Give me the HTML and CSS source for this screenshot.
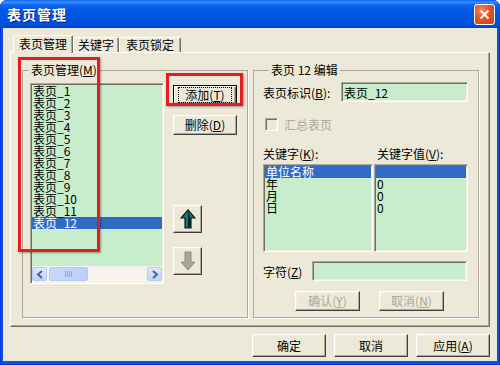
FILE: index.html
```html
<!DOCTYPE html>
<html lang="zh">
<head>
<meta charset="utf-8">
<title>表页管理</title>
<link rel="stylesheet" href="styles.css">
</head>
<body>
<div class="window">
  <div class="titlebar">
    <span class="title">表页管理</span>
    <div class="close"><svg width="11" height="11" viewBox="0 0 11 11"><path d="M1.5 1.5L9.5 9.5M9.5 1.5L1.5 9.5" stroke="#fff" stroke-width="2"/></svg></div>
  </div>
  <div class="client">
    <div class="tabs">
      <div class="tab active">表页管理</div>
      <div class="tab tab-key">关键字</div>
      <div class="tab">表页锁定</div>
    </div>
    <div class="panel">
      <fieldset class="group group-left">
        <legend>表页管理(<u>M</u>)</legend>
        <div class="left-body">
          <div class="listbox sheets">
            <div class="items">
              <div class="item">表页_1</div>
              <div class="item">表页_2</div>
              <div class="item">表页_3</div>
              <div class="item">表页_4</div>
              <div class="item">表页_5</div>
              <div class="item">表页_6</div>
              <div class="item">表页_7</div>
              <div class="item">表页_8</div>
              <div class="item">表页_9</div>
              <div class="item">表页_10</div>
              <div class="item">表页_11</div>
              <div class="item sel">表页_12</div>
            </div>
            <div class="hscroll">
              <div class="sb-btn"><svg width="8" height="9" viewBox="0 0 8 9"><path d="M6 1L2 4.5L6 8" fill="none" stroke="#4d6185" stroke-width="2"/></svg></div>
              <div class="sb-thumb"><svg width="8" height="6" viewBox="0 0 8 6"><path d="M0.5 0V6M2.5 0V6M4.5 0V6M6.5 0V6" stroke="#8ca8ea" stroke-width="1"/></svg></div>
              <div class="sb-track"></div>
              <div class="sb-btn"><svg width="8" height="9" viewBox="0 0 8 9"><path d="M2 1L6 4.5L2 8" fill="none" stroke="#4d6185" stroke-width="2"/></svg></div>
            </div>
          </div>
          <div class="side-buttons">
            <button class="btn side default"><span class="focus">添加(<u>T</u>)</span></button>
            <button class="btn side del">删除(<u>D</u>)</button>
            <button class="btn arrow up"><svg width="16" height="20" viewBox="0 0 16 20"><path d="M8 1L15 9H11V19H5V9H1Z" fill="#0e7a78" stroke="#0b1b1b" stroke-width="1.2" stroke-linejoin="miter"/><path d="M8 2.5V18.5H10.5V9" fill="#082020"/></svg></button>
            <button class="btn arrow down"><svg width="16" height="20" viewBox="0 0 16 20"><path d="M5 1H11V11H15L8 19L1 11H5Z" fill="#a7a699" stroke="#8f8e84" stroke-width="1"/></svg></button>
          </div>
        </div>
      </fieldset>
      <fieldset class="group group-right">
        <legend>表页 12 编辑</legend>
        <div class="row id-row">
          <span class="lbl lbl-id">表页标识(<u>B</u>):</span>
          <div class="input id-input">表页_12</div>
        </div>
        <div class="check-row">
          <span class="checkbox"></span>
          <span class="disabled-text">汇总表页</span>
        </div>
        <div class="kv-labels">
          <span class="kv-lbl-key">关键字(<u>K</u>):</span>
          <span>关键字值(<u>V</u>):</span>
        </div>
        <div class="kv-lists">
          <div class="listbox kv-keys">
            <div class="item sel">单位名称</div>
            <div class="item">年</div>
            <div class="item">月</div>
            <div class="item">日</div>
          </div>
          <div class="listbox kv-vals">
            <div class="item sel">&nbsp;</div>
            <div class="item">0</div>
            <div class="item">0</div>
            <div class="item">0</div>
          </div>
        </div>
        <div class="row char-row">
          <span class="lbl lbl-char">字符(<u>Z</u>)</span>
          <div class="input char-input"></div>
        </div>
        <div class="edit-buttons">
          <button class="btn small disabled">确认(<u>Y</u>)</button>
          <button class="btn small disabled">取消(<u>N</u>)</button>
        </div>
      </fieldset>
    </div>
    <div class="footer">
      <button class="btn foot">确定</button>
      <button class="btn foot">取消</button>
      <button class="btn foot">应用(<u>A</u>)</button>
    </div>
  </div>
  <div class="mark mark-list"></div>
  <div class="mark mark-add"></div>
</div>
</body>
</html>
```

FILE: styles.css
```css
* { box-sizing: border-box; }

html, body {
  margin: 0;
  padding: 0;
  background: #ffffff;
}

body {
  font-family: "Noto Sans CJK SC", "Noto Sans", sans-serif;
  font-size: 12px;
  color: #000;
}

.window {
  position: relative;
  width: 500px;
  height: 365px;
  display: flex;
  flex-direction: column;
  background: #0a52e0;
  border-radius: 7px 7px 0 0;
  overflow: hidden;
  box-shadow: inset 1px 0 0 #0831d9, inset -1px 0 0 #0831d9, inset 0 -1px 0 #0831d9;
}

.titlebar {
  flex: none;
  height: 28px;
  display: flex;
  align-items: center;
  justify-content: space-between;
  padding: 0 5px 0 7px;
  background: linear-gradient(#0a5fef 0px, #3d8ffd 2px, #1067ef 5px, #0057e5 10px, #0054e3 18px, #0050df 24px, #0043cc 28px);
}

.title {
  color: #fff;
  font-weight: bold;
  font-size: 14px;
  line-height: 16px;
  letter-spacing: 1px;
  text-shadow: 1px 1px 0 #0a1e74;
}

.close {
  width: 21px;
  height: 21px;
  border: 1px solid #fff;
  border-radius: 3px;
  background: radial-gradient(circle at 35% 30%, #f08a66 0%, #e1552d 45%, #c8401b 100%);
  display: flex;
  align-items: center;
  justify-content: center;
}

.client {
  flex: 1;
  margin: 0 3px 4px 3px;
  background: #ece9d8;
  padding: 7px 7px 0 7px;
  display: flex;
  flex-direction: column;
}

.tabs {
  display: flex;
  align-items: flex-end;
  height: 17px;
  padding-left: 3px;
}

.tab {
  height: 15px;
  padding: 0 6px;
  line-height: 13px;
  border-style: solid;
  border-width: 1px 1px 0 1px;
  border-color: #fff #716f64 transparent #fff;
  border-radius: 2px 2px 0 0;
  background: #ece9d8;
  box-shadow: inset -1px 0 0 #aca899;
}

.tab-key { padding: 0 4px; }

.tab.active {
  height: 18px;
  margin-bottom: -1px;
  position: relative;
  z-index: 1;
  padding: 0 5px;
  line-height: 15px;
}

.panel {
  height: 275px;
  flex: none;
  display: flex;
  gap: 5px;
  padding: 11px 0 0 11px;
  border: 1px solid;
  border-color: #fff #716f64 #716f64 #fff;
  box-shadow: inset -1px -1px 0 #aca899;
}

.group {
  margin: 0;
  padding: 0;
  min-width: 0;
  height: 254px;
  border: 1px solid #aca899;
  box-shadow: 1px 1px 0 #fff;
}

.group legend {
  margin-left: 6px;
  padding: 0 2px;
  font-size: 12px;
  line-height: 12px;
  height: 12px;
}

.group-left { width: 226px; }
.group-right { width: 226px; padding-left: 9px; }

.left-body {
  display: flex;
  gap: 9px;
  padding: 7px 0 0 7px;
}

.listbox {
  background: #c7edcc;
  border: 1px solid;
  border-color: #aca899 #fff #fff #aca899;
  box-shadow: inset 1px 1px 0 #716f64, inset -1px -1px 0 #f1efe2;
  padding: 1px;
}

.sheets {
  width: 134px;
  height: 201px;
  display: flex;
  flex-direction: column;
}

.items { flex: 1; }

.item {
  height: 12px;
  line-height: 12px;
  padding-left: 1px;
  white-space: nowrap;
}

.item.sel {
  background: #316ac5;
  color: #fff;
}

.hscroll {
  height: 16px;
  display: flex;
  background: #f4f3ee;
  padding: 1px 0;
}

.sb-btn {
  width: 15px;
  height: 14px;
  border: 1px solid #b7caf5;
  border-radius: 2px;
  background: linear-gradient(#dfe8fe, #c1d3fb);
  display: flex;
  align-items: center;
  justify-content: center;
}

.sb-thumb {
  width: 39px;
  height: 14px;
  margin-left: 2px;
  border: 1px solid #b7caf5;
  border-radius: 2px;
  background: linear-gradient(90deg, #c9d8fc, #bccffb);
  display: flex;
  align-items: center;
  justify-content: center;
}

.sb-track { flex: 1; }

.side-buttons {
  display: flex;
  flex-direction: column;
  align-items: flex-start;
}

.btn {
  font-family: inherit;
  font-size: 12px;
  color: #000;
  background: #ece9d8;
  border: 1px solid;
  border-color: #fff #404040 #404040 #fff;
  box-shadow: inset -1px -1px 0 #aca899, inset 1px 1px 0 #f1efe2;
  border-radius: 0;
  padding: 0;
  margin: 0;
  display: flex;
  align-items: center;
  justify-content: center;
  line-height: 12px;
}

.btn u, legend u, .lbl u, .kv-labels u { text-underline-offset: 1px; }

.side {
  width: 64px;
  height: 20px;
}

.default {
  margin-top: 2px;
  border: 1px solid #000;
  box-shadow: inset 1px 1px 0 #fff, inset -1px -1px 0 #716f64, inset -2px -2px 0 #aca899;
}

.focus {
  border: 1px dotted #000;
  padding: 1px 5px;
  width: 54px;
  text-align: center;
}

.del { margin-top: 10px; }

.arrow {
  width: 29px;
  height: 28px;
}

.up { margin-top: 70px; }
.down { margin-top: 14px; }

.row {
  display: flex;
  align-items: center;
}

.id-row { margin-top: 6px; }

.lbl-id { width: 78px; }

.input {
  height: 20px;
  background: #c7edcc;
  border: 1px solid;
  border-color: #aca899 #fff #fff #aca899;
  box-shadow: inset 1px 1px 0 #716f64, inset -1px -1px 0 #f1efe2;
  padding: 3px 2px 0;
  line-height: 14px;
}

.id-input { width: 127px; }

.check-row {
  display: flex;
  align-items: center;
  gap: 6px;
  margin-top: 16px;
  padding-left: 2px;
  height: 13px;
}

.checkbox {
  width: 13px;
  height: 13px;
  border: 1px solid;
  border-color: #aca899 #fff #fff #aca899;
  box-shadow: inset 1px 1px 0 #716f64, inset -1px -1px 0 #f1efe2;
  background: #ece9d8;
}

.disabled-text { color: #aca899; }

.kv-labels {
  display: flex;
  margin-top: 17px;
  height: 12px;
  line-height: 12px;
}

.kv-lbl-key { width: 114px; }

.kv-lists {
  display: flex;
  gap: 1px;
  margin-top: 4px;
}

.kv-keys { width: 110px; height: 88px; }
.kv-vals { width: 94px; height: 88px; }

.char-row { margin-top: 9px; }
.lbl-char { width: 49px; }
.char-input { width: 155px; }

.edit-buttons {
  display: flex;
  gap: 19px;
  margin-top: 10px;
  padding-left: 32px;
}

.small {
  width: 65px;
  height: 20px;
}

.disabled { color: #aca899; }

.footer {
  display: flex;
  justify-content: flex-end;
  gap: 8px;
  margin-top: 7px;
}

.foot {
  width: 74px;
  height: 23px;
}

.mark {
  position: absolute;
  border: 3px solid #e51d22;
  box-shadow: 1px 1px 2px rgba(0, 0, 0, 0.35);
  pointer-events: none;
}

.mark-list {
  left: 18px;
  top: 57px;
  width: 82px;
  height: 195px;
}

.mark-add {
  left: 166px;
  top: 73px;
  width: 77px;
  height: 33px;
}
```
